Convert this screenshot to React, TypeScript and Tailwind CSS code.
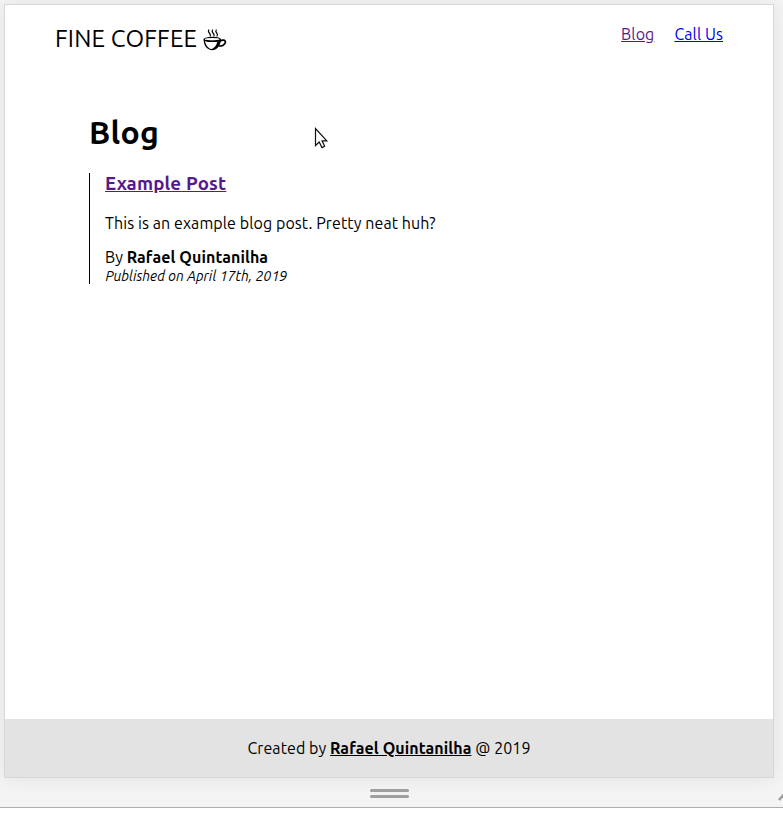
function CoffeeCup() {
  return (
    <svg className="ml-[6px] mt-[4px] shrink-0" width="24" height="22" viewBox="0 0 24 22" fill="none" stroke="#000" strokeLinecap="round">
      <path d="M5.8 1 Q4.8 2.5 6.3 4 T7.3 7 M9.5 1 Q8.5 2.5 10 4 T11 7 M13.2 1 Q12.2 2.5 13.7 4 T14 7" strokeWidth="1.2" />
      <ellipse cx="9.2" cy="10.4" rx="8" ry="2" strokeWidth="1.2" />
      <path d="M1.2 10.6 C1.4 15 3.5 18.5 6.5 20 Q9.2 21.2 12 20 C15.5 18 17.1 15 17.2 10.6" strokeWidth="1.3" />
      <path d="M14.2 12.8 L17 11.5 C16.7 16 14 20 10.5 20.6 L7.5 20.5 C11.5 19.2 13.8 16.5 14.2 12.8Z" fill="#000" stroke="none" />
      <path d="M3 11.3 Q9 13 15.5 11.3" strokeWidth="1.3" />
      <path d="M17.3 12 C19 10.5 22.5 10.8 22.4 13.1 C22.3 15.7 18.8 17.4 15.8 16.9" strokeWidth="1.7" />
    </svg>
  );
}

function Cursor() {
  return (
    <svg className="absolute left-[314px] top-[127px]" width="15" height="23" viewBox="0 0 15 23">
      <path d="M1.5 1.5 V18.5 L5.2 15 L8 20.6 L10.6 19.3 L8.1 13.8 H12.8 Z" fill="#fff" stroke="#111" strokeWidth="1.2" />
    </svg>
  );
}

export default function App() {
  return (
    <div className="relative h-[833px] w-[783px] overflow-hidden bg-white font-['Ubuntu','Noto_Sans',sans-serif] text-[16px] leading-[18px] tracking-[0.09px] text-black">
      <div className="flex h-[808px] flex-col overflow-hidden border-b border-[#adadad] bg-[#f4f4f4] pl-[4px] pt-[4px]">
        <div className="flex h-[774px] w-[770px] shrink-0 flex-col border border-[#d7d7d7] bg-white shadow-[0_0_20px_rgba(0,0,0,0.08)]">
          <header className="flex h-[80px] items-start justify-between px-[50px] pt-[20px]">
            <div className="flex">
              <span className="text-[24px] leading-[27px] tracking-[0.19px]">FINE COFFEE</span>
              <CoffeeCup />
            </div>
            <nav className="flex gap-[20px]">
              <a className="text-[#551a8b] underline">Blog</a>
              <a className="text-[#0000ee] underline">Call Us</a>
            </nav>
          </header>
          <main className="flex-1 px-[84px] pt-[29px]">
            <h1 className="text-[32px] font-bold leading-[37px] tracking-[0.3px]">Blog</h1>
            <article className="mt-[22px] h-[111px] border-l border-black pl-[15px]">
              <h3 className="text-[18.72px] font-bold leading-[21px] tracking-[0.16px] text-[#551a8b] underline">Example Post</h3>
              <p className="mt-[20px]">This is an example blog post. Pretty neat huh?</p>
              <p className="mt-[16px]">By <strong>Rafael Quintanilha</strong></p>
              <p className="pl-[0.5px] pt-px text-[14px] italic tracking-[0.02px]">Published on April 17th, 2019</p>
            </article>
          </main>
          <footer className="flex h-[58px] items-center justify-center bg-[#e3e3e3]">
            <p className="whitespace-pre">Created by <strong className="underline">Rafael Quintanilha</strong> @ 2019</p>
          </footer>
        </div>
        <div className="flex h-[29px] items-center justify-between pt-[2px]">
          <div className="ml-[366px] flex flex-col gap-[3px]">
            <div className="h-[3px] w-[39px] rounded-full bg-[#9f9f9f]" />
            <div className="h-[3px] w-[39px] rounded-full bg-[#9f9f9f]" />
          </div>
          <svg className="mt-[6px]" width="5" height="10" viewBox="0 0 5 10"><path d="M1 8 L7 1" stroke="#9f9f9f" strokeWidth="2.5" /></svg>
        </div>
      </div>
      <Cursor />
    </div>
  );
}
